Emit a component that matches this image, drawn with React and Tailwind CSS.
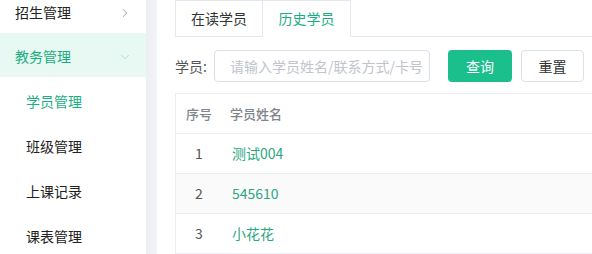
import { ChevronRight, ChevronDown } from 'lucide-react';

const MENU = [
  { label: '学员管理', active: true },
  { label: '班级管理' },
  { label: '上课记录' },
  { label: '课表管理' },
];

const ROWS = [
  { no: 1, name: '测试004' },
  { no: 2, name: '545610' },
  { no: 3, name: '小花花' },
];

export default function App() {
  return (
    <div
      className="flex h-[254px] w-[592px] overflow-hidden bg-white text-[14px] text-[#333]"
      style={{ fontFamily: '"Noto Sans CJK SC", "Noto Sans", sans-serif' }}
    >
      {/* Sidebar */}
      <aside className="flex w-[146px] shrink-0 flex-col -mt-[10px]">
        <div className="flex h-[43px] shrink-0 items-center justify-between pl-[15px] pr-[14px] pt-[2px] text-[#222]">
          <span>招生管理</span>
          <ChevronRight size={14} strokeWidth={1.3} className="text-[#888]" />
        </div>
        <div className="flex h-[44px] shrink-0 items-center justify-between bg-[#e8f8f3] pl-[15px] pr-[14px] pt-[3px] text-[#1aae82]">
          <span>教务管理</span>
          <ChevronDown size={14} strokeWidth={1.3} className="text-[#9ad8c3]" />
        </div>
        {MENU.map((m) => (
          <div
            key={m.label}
            className={`flex h-[45px] shrink-0 items-center pl-[26px] pt-[3px] ${m.active ? 'text-[#1aae82]' : 'text-[#222]'}`}
          >
            {m.label}
          </div>
        ))}
      </aside>
      <div className="w-[11px] shrink-0 bg-gradient-to-r from-[#eceef3] to-[#f3f4f8]" />

      {/* Content */}
      <main className="flex-1 pl-[18px]">
        <div className="flex h-[37px] items-end border-b border-[#e4e7ed]">
          <div className="-mb-px flex h-[37px] w-[88px] items-center justify-center border border-[#e4e7ed] text-[#333]">
            在读学员
          </div>
          <div className="-mb-px flex h-[37px] w-[88px] items-center justify-center border border-l-0 border-b-white border-[#e4e7ed] bg-white text-[#1aae82]">
            历史学员
          </div>
        </div>

        <div className="mt-[13px] flex h-[32px] items-center">
          <span className="w-[39px] text-[#555]">学员:</span>
          <div className="flex h-[32px] w-[216px] items-center overflow-hidden whitespace-nowrap rounded-[4px] border border-[#dcdfe6] pl-[15px] text-[#c0c4cc]">
            请输入学员姓名/联系方式/卡号
          </div>
          <button className="ml-[18px] h-[32px] w-[64px] rounded-[4px] bg-[#1abf8b] text-white">查询</button>
          <button className="ml-[9px] h-[32px] w-[63px] rounded-[4px] border border-[#dcdfe6] bg-white text-[#333]">
            重置
          </button>
        </div>

        <div className="mt-[11px] border-l border-t border-[#ebeef5]">
          <div className="flex h-[40px] items-center border-b border-[#ebeef5] text-[13px] font-medium text-[#80848c]">
            <span className="w-[54px] pl-[10px]">序号</span>
            <span>学员姓名</span>
          </div>
          {ROWS.map((r, i) => (
            <div
              key={r.no}
              className={`flex h-[40px] items-center border-b border-[#ebeef5] text-[14px] ${i === 1 ? 'bg-[#fafafa]' : 'bg-white'}`}
            >
              <span className="w-[56px] pr-[10px] text-center text-[#555]">{r.no}</span>
              <span className="text-[#2aa87f]">{r.name}</span>
            </div>
          ))}
        </div>
      </main>
    </div>
  );
}
